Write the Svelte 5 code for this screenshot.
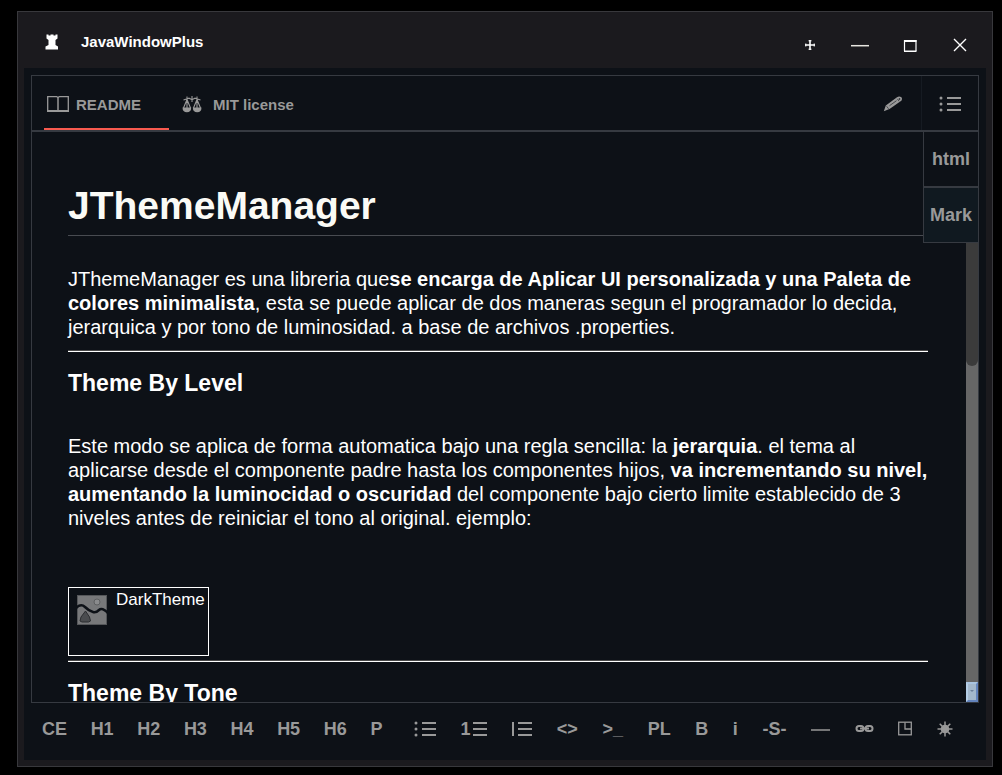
<script lang="ts">
  type Tool = { label: string; text?: string; icon?: string };

  const tools: Tool[] = [
    { label: 'Center', text: 'CE' },
    { label: 'Heading 1', text: 'H1' },
    { label: 'Heading 2', text: 'H2' },
    { label: 'Heading 3', text: 'H3' },
    { label: 'Heading 4', text: 'H4' },
    { label: 'Heading 5', text: 'H5' },
    { label: 'Heading 6', text: 'H6' },
    { label: 'Paragraph', text: 'P' },
    { label: 'Bullet list', icon: 'bullets' },
    { label: 'Numbered list', text: '1', icon: 'lines' },
    { label: 'Quote', icon: 'quote' },
    { label: 'Code', text: '<>' },
    { label: 'Console', text: '>_' },
    { label: 'Language', text: 'PL' },
    { label: 'Bold', text: 'B' },
    { label: 'Italic', text: 'i' },
    { label: 'Strikethrough', text: '-S-' },
    { label: 'Horizontal rule', icon: 'rule' },
    { label: 'Link', icon: 'link' },
    { label: 'Image', icon: 'image' },
    { label: 'Effects', icon: 'sun' },
  ];

  const rays = [0, 45, 90, 135, 180, 225, 270, 315];
</script>

<div class="desktop">
  <main class="window">
    <header class="titlebar">
      <svg class="rook" width="14" height="16" viewBox="0 0 14 16" aria-hidden="true">
        <path fill="#fff" d="M1.500.5h2v1h2v-1h3v1h2v-1h2v4l-2 1.500v5l2.500 1.500v3H.5v-3L3.500 11V6l-2-1.500z" />
      </svg>
      <span class="title">JavaWindowPlus</span>
      <div class="controls">
        <button class="control" aria-label="Move">
          <svg width="10" height="10" viewBox="0 0 10 10"><path fill="none" stroke="#fff" d="M5 0v10M0 5h10" stroke-width="1.600" /><path fill="none" stroke="#fff" d="M3.500.8h3M3.500 9.200h3M.8 3.500v3M9.200 3.500v3" /></svg>
        </button>
        <button class="control" aria-label="Minimize">
          <svg width="18" height="12" viewBox="0 0 18 12"><path stroke="#e8e6e0" stroke-width="1.500" d="M0 6.700h18" /></svg>
        </button>
        <button class="control" aria-label="Maximize">
          <svg width="14" height="14" viewBox="0 0 14 14"><path fill="none" stroke="#fff" d="M1.500 2v11M13 2v11" stroke-width="1.200" /><path fill="#fff" d="M1 2h12.500v2H1zM1 12.500h12.500v1.500H1z" /></svg>
        </button>
        <button class="control" aria-label="Close">
          <svg width="14" height="14" viewBox="0 0 14 14"><path stroke="#fff" stroke-width="1.400" d="M1 1l12 12M13 1L1 13" /></svg>
        </button>
      </div>
    </header>

    <div class="body">
      <section class="frame">
        <nav class="tabs">
          <button class="tab active">
            <svg width="22" height="16" viewBox="0 0 22 16" aria-hidden="true"><path fill="none" stroke="#999" d="M.7 15V.6h8.500Q11 .7 11 2 11 .7 12.800.6h8.500V15" stroke-width="1.300" /><path stroke="#999" d="M11 1.500V14" stroke-width="1.500" /><path stroke="#999" stroke-width="2" d="M0 15h22" /></svg>
            README
          </button>
          <button class="tab">
            <svg width="20" height="17" viewBox="0 0 20 17" aria-hidden="true">
              <g fill="none" stroke="#999" stroke-width="1.100"><path d="M5 .5v4M1.500 4L7 2.200l3 1.500 3-1.500L18.500 4M10 0v6M15 .5v4M5 3.500L1.500 12M5 3.500V12M5 3.500L8.500 12M15 3.500L11.500 12M15 3.500V12M15 3.500L18.500 12" /></g>
              <path fill="#999" d="M.5 11.500h8.700q0 4.800-4.300 4.800T.5 11.500zM10.800 11.500h8.700q0 4.800-4.300 4.800t-4.400-4.800z" />
            </svg>
            MIT license
          </button>
          <button class="tool-edit" aria-label="Edit">
            <svg width="20" height="16" viewBox="0 0 20 16"><path fill="#999" d="M.8 15.200l2-5.700L14 1.300q2.200-1.500 4-.2t.3 3.700L6.500 13z" /><path stroke="#0d1117" fill="none" d="M6.500 9.700l7-5M3.600 10.300l2 2.500M14.300 2.800l1.800 2.400" stroke-width=".6" /><circle cx="16.500" cy="3" r=".8" fill="#0d1117" /></svg>
          </button>
          <button class="tool-menu" aria-label="Outline">
            {@render listIcon()}
          </button>
        </nav>

        <div class="viewport">
          <article class="document">
            <h1>JThemeManager</h1>
            <p>JThemeManager es una libreria que<b>se encarga de Aplicar UI personalizada y una Paleta de colores minimalista</b>, esta se puede aplicar de dos maneras segun el programador lo decida, jerarquica y por tono de luminosidad. a base de archivos .properties.</p>
            <hr />
            <h2>Theme By Level</h2>
            <p class="spaced">Este modo se aplica de forma automatica bajo una regla sencilla: la <b>jerarquia</b>. el tema al aplicarse desde el componente padre hasta los componentes hijos, <b>va incrementando su nivel, aumentando la luminocidad o oscuridad</b> del componente bajo cierto limite establecido de 3 niveles antes de reiniciar el tono al original. ejemplo:</p>
            <figure>
              <svg width="32" height="32" viewBox="0 0 32 32" aria-hidden="true">
                <rect x="1.500" y="1.500" width="29" height="29" fill="#77787a" stroke="#55575a" />
                <circle cx="21" cy="8" r="3" fill="#8a8b8d" stroke="#5d5f61" />
                <path fill="#4a4c4f" stroke="#2b2d30" d="M9.500 17l4 6 1 4-2 1H6l-2-1 1-4z" />
                <path fill="none" stroke="#0d1117" stroke-width="2.500" d="M0 14q5-5 9-1t8 5q3 1 6-2t9 3" />
              </svg>
              <figcaption>DarkTheme</figcaption>
            </figure>
            <hr class="tight" />
            <h2>Theme By Tone</h2>
          </article>

          <div class="scrollbar">
            <div class="thumb"></div>
            <button class="scroll-down" aria-label="Scroll down"></button>
          </div>

          <div class="popup">
            <button>html</button>
            <button class="selected">Mark</button>
          </div>
        </div>
      </section>

      <footer class="toolbar">
        {#each tools as tool}
          <button class={tool.icon} aria-label={tool.label}>
            {#if tool.text}<span>{tool.text}</span>{/if}
            {#if tool.icon === 'bullets'}
              {@render listIcon()}
            {:else if tool.icon === 'lines'}
              <svg width="15" height="16" viewBox="0 0 15 16"><path stroke="#999" stroke-width="2" d="M1 2h14M1 8h14M1 14h14" /></svg>
            {:else if tool.icon === 'quote'}
              <svg width="21" height="16" viewBox="0 0 21 16"><path stroke="#999" stroke-width="2" d="M2 1v14M7 2h14M7 8h14M7 14h14" /></svg>
            {:else if tool.icon === 'rule'}
              <svg width="19" height="16" viewBox="0 0 19 16"><path stroke="#999" stroke-width="1.500" d="M0 9h19" /></svg>
            {:else if tool.icon === 'link'}
              <svg width="19" height="16" viewBox="0 0 19 16"><g fill="none" stroke="#999" stroke-width="2"><rect x="1.500" y="5" width="7" height="5" rx="2.500" /><rect x="10.500" y="5" width="7" height="5" rx="2.500" /><path d="M5 7.500h9" /></g></svg>
            {:else if tool.icon === 'image'}
              <svg width="14" height="16" viewBox="0 0 14 16"><g fill="none" stroke="#999" stroke-width="1.300"><rect x=".7" y="1.200" width="12.600" height="12.600" /><path d="M7 1.500V8h6" /></g></svg>
            {:else if tool.icon === 'sun'}
              <svg width="16" height="16" viewBox="-8 -8 16 16"><circle r="4.300" fill="#999" />{#each rays as angle}<path d="M0-3v-4.500" stroke="#999" stroke-width="1.500" transform="rotate({angle})" />{/each}</svg>
            {/if}
          </button>
        {/each}
      </footer>
    </div>
  </main>
</div>

{#snippet listIcon()}
  <svg width="22" height="16" viewBox="0 0 22 16">
    <g fill="#999"><circle cx="2" cy="2" r="1.500" /><circle cx="2" cy="8" r="1.500" /><circle cx="2" cy="14" r="1.500" /></g>
    <path stroke="#999" stroke-width="2" d="M8 2h14M8 8h14M8 14h14" />
  </svg>
{/snippet}

<style>
  :global(body) {
    margin: 0;
    background: #000;
  }
  * {
    box-sizing: border-box;
  }
  button {
    display: flex;
    align-items: center;
    margin: 0;
    padding: 0;
    border: 0;
    background: none;
    color: #999;
    font: inherit;
  }
  svg {
    display: block;
    flex: none;
  }
  .desktop {
    display: flex;
    height: 100vh;
    padding: 11px 9px 8px 17px;
    font-family: 'Liberation Sans', Arial, sans-serif;
  }
  .window {
    display: flex;
    flex: 1;
    flex-direction: column;
    min-width: 0;
    padding: 0 6px 6px;
    border: 1px solid #38383c;
    background: #1b1a1e;
  }
  .titlebar {
    display: flex;
    flex: none;
    align-items: center;
    height: 56px;
    padding: 4px 8px 0 21px;
    color: #fff;
    font-size: 15px;
    font-weight: bold;
  }
  .title {
    margin-left: 22px;
    padding-bottom: 2px;
  }
  .controls {
    display: flex;
    gap: 14px;
    margin-left: auto;
    padding-top: 6px;
  }
  .control {
    justify-content: center;
    width: 36px;
    height: 24px;
  }
  .body {
    display: flex;
    flex: 1;
    flex-direction: column;
    min-height: 0;
    padding: 7px 7px 0;
    background: #0d1117;
  }
  .frame {
    display: flex;
    flex: 1;
    flex-direction: column;
    min-height: 0;
    border: 1px solid #363a41;
  }
  .tabs {
    display: flex;
    flex: none;
    height: 56px;
    padding-left: 12px;
    border-bottom: 2px solid #363a41;
    font-size: 15px;
    font-weight: bold;
  }
  .tab {
    gap: 7px;
    padding: 4px 28px 0 3px;
    border-bottom: 2px solid transparent;
  }
  .tab + .tab {
    gap: 11px;
    padding-left: 13px;
  }
  .tab.active {
    border-color: #f85a4f;
  }
  .tool-edit {
    margin-left: auto;
    padding: 2px 18px 0;
    border-right: 1px solid #161b22;
  }
  .tool-menu {
    justify-content: center;
    width: 56px;
    padding-top: 2px;
  }
  .viewport {
    position: relative;
    display: flex;
    flex: 1;
    min-height: 0;
  }
  .document {
    flex: 1;
    min-width: 0;
    padding: 48px 38px 0 36px;
    overflow: hidden;
    color: #fff;
    font-size: 20px;
    line-height: 24px;
  }
  h1 {
    margin: 0 -38px 31px 0;
    padding-bottom: 4px;
    border-bottom: 1px solid #484b51;
    color: #fafaf5;
    font-size: 39px;
    line-height: 51px;
  }
  p {
    margin: 0;
  }
  p.spaced {
    margin: 37px 0 57px;
  }
  hr {
    height: 2px;
    margin: 11px 0 17px;
    border: 0;
    border-top: 1px solid #4a4a4a;
    background: #fff;
  }
  hr.tight {
    margin-top: 4px;
  }
  h2 {
    margin: 0;
    font-size: 23px;
    line-height: 28px;
  }
  figure {
    display: flex;
    gap: 8px;
    width: 141px;
    height: 69px;
    margin: 0;
    padding: 0 0 0 7px;
    border: 1px solid #fff;
    font-size: 17px;
  }
  figure svg {
    margin-top: 6px;
  }
  .scrollbar {
    display: flex;
    flex: none;
    flex-direction: column;
    width: 12px;
    background: #666;
  }
  .thumb {
    height: 41%;
    border-radius: 0 0 6px 6px;
    background: #3b3b3b;
  }
  .scroll-down {
    justify-content: center;
    height: 20px;
    margin-top: auto;
    border: 2px solid #6384bd;
    border-top-color: #a9c4e0;
    border-left-color: #b5cee6;
    background: #a3b8cc;
  }
  .scroll-down::after {
    border: 2px solid transparent;
    border-top-color: #6b7f99;
    content: '';
  }
  .popup {
    position: absolute;
    top: 0;
    right: 0;
    width: 55px;
    border: 1px solid #363a41;
    border-width: 0 0 1px 1px;
    background: #0d1117;
    font-size: 18px;
    font-weight: bold;
  }
  .popup button {
    justify-content: center;
    width: 100%;
    height: 54px;
  }
  .popup .selected {
    height: 56px;
    border-top: 2px solid #363a41;
    background: #101920;
  }
  .toolbar {
    display: flex;
    flex: none;
    justify-content: space-between;
    height: 57px;
    padding: 0 26px 5px 11px;
    font-size: 18px;
    font-weight: bold;
  }
  .toolbar button {
    gap: 1px;
  }
  .toolbar button:nth-child(n + 10) {
    padding-left: 1px;
  }
  .toolbar .bullets {
    padding-left: 8px;
  }
</style>
